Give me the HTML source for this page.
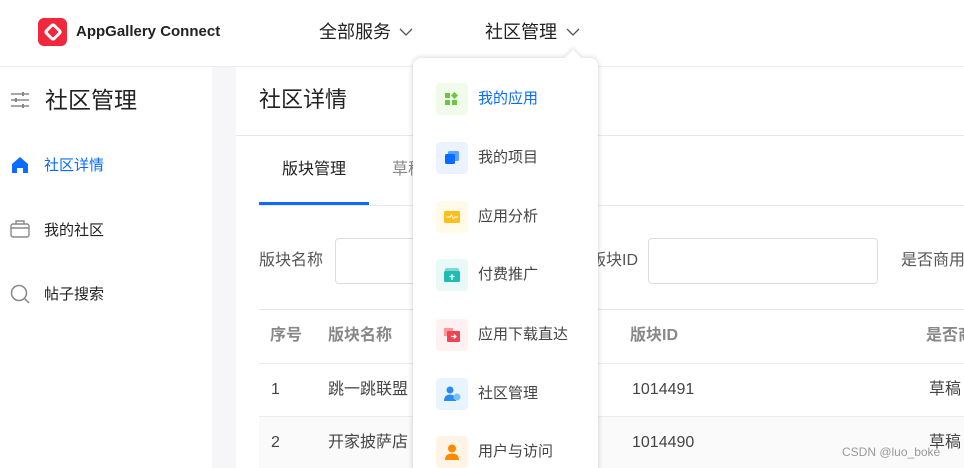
<!DOCTYPE html>
<html><head><meta charset="utf-8"><style>
*{margin:0;padding:0;box-sizing:border-box}
html,body{width:964px;height:468px;overflow:hidden}
body{background:#fff;font-family:"Liberation Sans","Noto Sans CJK SC",sans-serif;position:relative;color:#333}
.a{position:absolute;white-space:nowrap;line-height:1}
</style></head><body>
<!-- header -->
<div class="a" style="left:0;top:66px;width:964px;height:1px;background:#eee"></div>
<div class="a" style="left:38px;top:18px;width:29px;height:28px;border-radius:6px;background:#f0283c"></div>
<div class="a" style="left:46px;top:25px;width:14px;height:14px;border:3px solid #fff;border-radius:3px;transform:rotate(45deg)"></div>
<div class="a" style="left:76px;top:24px;font-size:15px;font-weight:bold;color:#222">AppGallery Connect</div>
<div class="a" style="left:319px;top:23px;font-size:18px;color:#222">全部服务</div>
<svg class="a" style="left:399px;top:27px" width="14" height="10"><path d="M1 2l6 6 6-6" fill="none" stroke="#555" stroke-width="1.3"/></svg>
<div class="a" style="left:485px;top:23px;font-size:18px;color:#222">社区管理</div>
<svg class="a" style="left:566px;top:27px" width="14" height="10"><path d="M1 2l6 6 6-6" fill="none" stroke="#555" stroke-width="1.3"/></svg>
<!-- sidebar -->
<div class="a" style="left:212px;top:67px;width:24px;height:401px;background:#f6f6f8"></div>
<svg class="a" style="left:10px;top:91px" width="20" height="18"><g stroke="#888" stroke-width="1.5"><path d="M1 3h18M1 9h18M1 15h18"/></g><g fill="#888"><rect x="12" y="1" width="2" height="4"/><rect x="5" y="7" width="2" height="4"/><rect x="12" y="13" width="2" height="4"/></g></svg>
<div class="a" style="left:45px;top:89px;font-size:23px;color:#222">社区管理</div>
<svg class="a" style="left:11px;top:156px" width="18" height="17"><path d="M1 8L9 1l8 7v9h-5v-5H6v5H1z" fill="#0a6cff"/></svg>
<div class="a" style="left:44px;top:158px;font-size:15px;color:#0a6cff">社区详情</div>
<svg class="a" style="left:10px;top:220px" width="20" height="18"><rect x="1" y="4" width="18" height="13" rx="2" fill="none" stroke="#888" stroke-width="1.4"/><path d="M6 4V1h8v3M1 8h18" fill="none" stroke="#888" stroke-width="1.4"/></svg>
<div class="a" style="left:44px;top:223px;font-size:15px;color:#222">我的社区</div>
<svg class="a" style="left:10px;top:284px" width="20" height="20"><circle cx="9" cy="9" r="7.5" fill="none" stroke="#888" stroke-width="1.5"/><path d="M14 14l5 5" stroke="#888" stroke-width="1.5"/></svg>
<div class="a" style="left:44px;top:287px;font-size:15px;color:#222">帖子搜索</div>
<!-- content -->
<div class="a" style="left:259px;top:89px;font-size:22px;color:#222">社区详情</div>
<div class="a" style="left:236px;top:135px;width:728px;height:1px;background:#e8e8e8"></div>
<div class="a" style="left:282px;top:162px;font-size:16px;color:#222">版块管理</div>
<div class="a" style="left:392px;top:162px;font-size:16px;color:#888">草稿</div>
<div class="a" style="left:259px;top:205px;width:705px;height:1px;background:#e8e8e8"></div>
<div class="a" style="left:259px;top:202px;width:110px;height:3px;background:#0a6cff"></div>
<div class="a" style="left:259px;top:253px;font-size:16px;color:#555">版块名称</div>
<div class="a" style="left:335px;top:238px;width:120px;height:46px;border:1px solid #ddd;border-radius:4px"></div>
<div class="a" style="left:590px;top:253px;font-size:16px;color:#555">版块ID</div>
<div class="a" style="left:648px;top:238px;width:230px;height:46px;border:1px solid #ddd;border-radius:4px"></div>
<div class="a" style="left:901px;top:253px;font-size:16px;color:#555">是否商用</div>
<div class="a" style="left:259px;top:309px;width:705px;height:1px;background:#e4e4e4"></div>
<div class="a" style="left:270px;top:328px;font-size:16px;font-weight:bold;color:#888">序号</div>
<div class="a" style="left:328px;top:328px;font-size:16px;font-weight:bold;color:#888">版块名称</div>
<div class="a" style="left:630px;top:328px;font-size:16px;font-weight:bold;color:#888">版块ID</div>
<div class="a" style="left:926px;top:328px;font-size:16px;font-weight:bold;color:#888">是否商</div>
<div class="a" style="left:259px;top:363px;width:705px;height:1px;background:#ececec"></div>
<div class="a" style="left:271px;top:382px;font-size:16px;color:#444">1</div>
<div class="a" style="left:328px;top:382px;font-size:16px;color:#444">跳一跳联盟</div>
<div class="a" style="left:632px;top:382px;font-size:16px;color:#444">1014491</div>
<div class="a" style="left:929px;top:382px;font-size:16px;color:#444">草稿</div>
<div class="a" style="left:259px;top:416px;width:705px;height:52px;background:#fafafa;border-top:1px solid #ececec"></div>
<div class="a" style="left:271px;top:435px;font-size:16px;color:#444">2</div>
<div class="a" style="left:328px;top:435px;font-size:16px;color:#444">开家披萨店</div>
<div class="a" style="left:632px;top:435px;font-size:16px;color:#444">1014490</div>
<div class="a" style="left:929px;top:435px;font-size:16px;color:#444">草稿</div>
<div class="a" style="left:842px;top:446px;font-size:12px;color:#999">CSDN @luo_boke</div>
<!-- dropdown -->
<div class="a" style="left:413px;top:58px;width:185px;height:420px;background:#fff;border-radius:8px;box-shadow:0 0 6px rgba(0,0,0,.2)"></div>
<div class="a" style="left:567px;top:52px;width:12px;height:12px;background:#fff;transform:rotate(45deg);box-shadow:-2px -2px 3px rgba(0,0,0,.08)"></div>
<div class="a" style="left:436px;top:83px;width:32px;height:32px;border-radius:4px;background:#f0fbe9"></div>
<svg class="a" style="left:445px;top:92px" width="14" height="14"><g fill="#6cc644"><rect x="0" y="1" width="5" height="5"/><rect x="0" y="8" width="5" height="5"/><rect x="7" y="8" width="5" height="5"/><rect x="7" y="1" width="5" height="5" transform="rotate(45 9.5 3.5)"/></g></svg>
<div class="a" style="left:478px;top:91px;font-size:15px;color:#0a6cff">我的应用</div>
<div class="a" style="left:436px;top:142px;width:32px;height:32px;border-radius:4px;background:#eaf3ff"></div>
<svg class="a" style="left:444px;top:151px" width="16" height="14"><rect x="4" y="0" width="11" height="10" rx="1.5" fill="#5aa0ff"/><rect x="1" y="3" width="10" height="10" rx="1.5" fill="#0a6cff"/></svg>
<div class="a" style="left:478px;top:150px;font-size:15px;color:#444">我的项目</div>
<div class="a" style="left:436px;top:201px;width:32px;height:32px;border-radius:4px;background:#fffbe8"></div>
<svg class="a" style="left:444px;top:211px" width="16" height="12"><rect width="16" height="12" rx="1.5" fill="#ffbe1a"/><path d="M2 6h4l1.5-2 2 4 1.5-2h3" fill="none" stroke="#fff" stroke-width="1"/></svg>
<div class="a" style="left:478px;top:209px;font-size:15px;color:#444">应用分析</div>
<div class="a" style="left:436px;top:259px;width:32px;height:32px;border-radius:4px;background:#e8f9f8"></div>
<svg class="a" style="left:444px;top:267px" width="16" height="16"><rect x="1" y="1" width="14" height="4" rx="1.5" fill="#7fd8d2"/><rect x="0" y="4" width="16" height="11" rx="1.5" fill="#1fbcb3"/><path d="M8 7v6M5.5 9.5h5" stroke="#fff" stroke-width="1.2"/></svg>
<div class="a" style="left:478px;top:267px;font-size:15px;color:#444">付费推广</div>
<div class="a" style="left:436px;top:319px;width:32px;height:32px;border-radius:4px;background:#fff1f1"></div>
<svg class="a" style="left:444px;top:327px" width="16" height="16"><rect x="0" y="1" width="9" height="8" fill="#f99"/><rect x="3" y="4" width="13" height="11" rx="1" fill="#f04452"/><path d="M7 9.5h5M10 7.5l2 2-2 2" fill="none" stroke="#fff" stroke-width="1.2"/></svg>
<div class="a" style="left:478px;top:327px;font-size:15px;color:#444">应用下载直达</div>
<div class="a" style="left:436px;top:378px;width:32px;height:32px;border-radius:4px;background:#e8f5ff"></div>
<svg class="a" style="left:444px;top:386px" width="17" height="16"><circle cx="6" cy="4" r="3.5" fill="#2a8cf0"/><path d="M0 15c0-5 3-6.5 6-6.5s6 1.5 6 6.5z" fill="#2a8cf0"/><circle cx="13" cy="11" r="3.5" fill="#7cc0fa"/></svg>
<div class="a" style="left:478px;top:386px;font-size:15px;color:#444">社区管理</div>
<div class="a" style="left:436px;top:436px;width:32px;height:32px;border-radius:4px;background:#fff4e6"></div>
<svg class="a" style="left:444px;top:444px" width="16" height="16"><circle cx="8" cy="4.5" r="4" fill="#ff8a00"/><path d="M1 16c0-5 3-6.5 7-6.5s7 1.5 7 6.5z" fill="#ff8a00"/></svg>
<div class="a" style="left:478px;top:444px;font-size:15px;color:#444">用户与访问</div>
</body></html>
